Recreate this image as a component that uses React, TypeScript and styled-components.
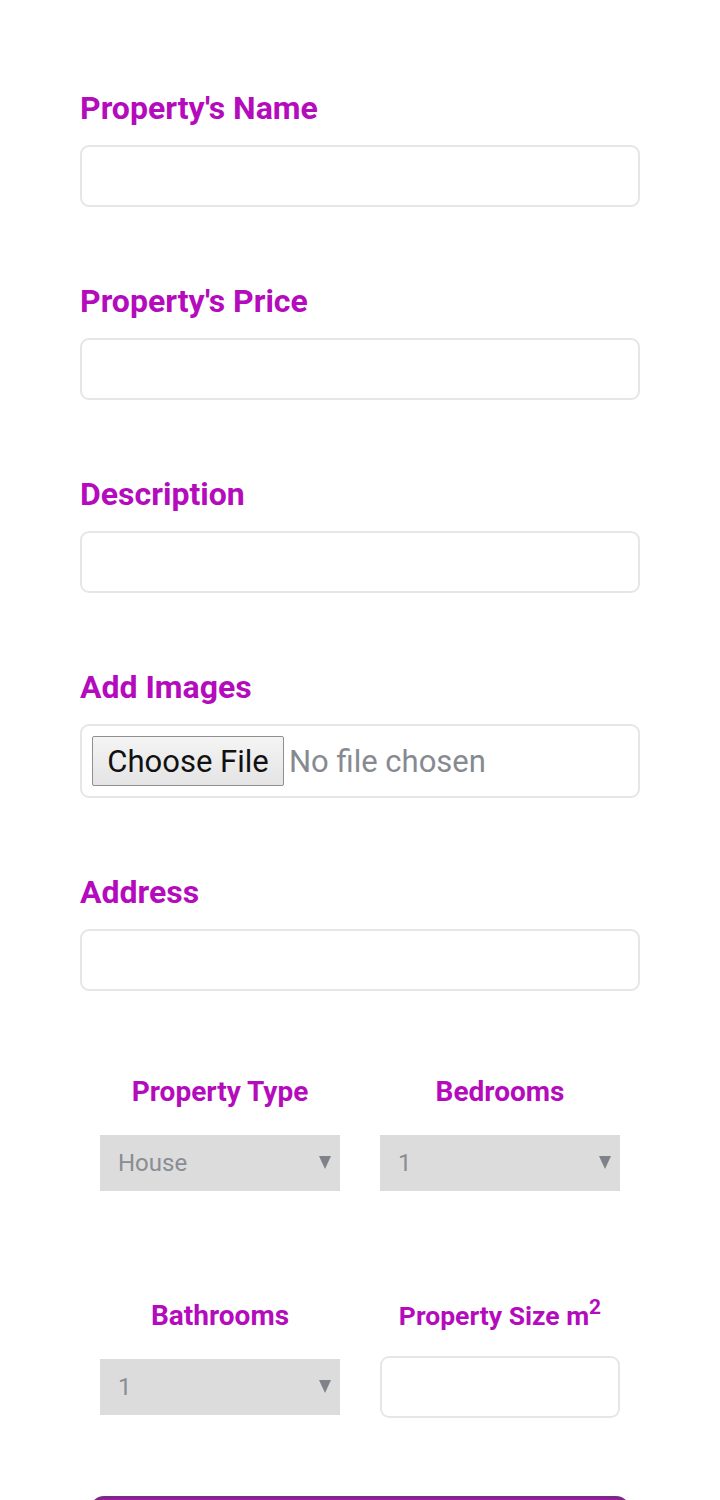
import React from "react";
import styled, { createGlobalStyle } from "styled-components";

const Global = createGlobalStyle`
  html, body { margin: 0; padding: 0; background: #ffffff; }
  body { font-family: Roboto, "Liberation Sans", Arial, sans-serif; }
  * { box-sizing: border-box; }
`;

const Form = styled.form`
  display: flex;
  flex-direction: column;
  padding: 91px 80px 0 80px;
  width: 720px;
  height: 1500px;
  overflow: hidden;
`;

const Field = styled.div<{ $mb?: number }>`
  display: flex;
  flex-direction: column;
  margin-bottom: ${(p) => p.$mb ?? 77}px;
`;

const Label = styled.label`
  font-family: Roboto, sans-serif;
  font-weight: 700;
  font-size: 32px;
  line-height: 34px;
  color: #b40cbc;
  margin-bottom: 20px;
`;

const TextInput = styled.input`
  height: 62px;
  width: 100%;
  border: 2px solid #e6e6e6;
  border-radius: 9px;
  background: #fff;
  font-family: Roboto, sans-serif;
  font-size: 24px;
  padding: 0 14px;
  outline: none;
`;

const FileBox = styled.div`
  height: 74px;
  border: 2px solid #e6e6e6;
  border-radius: 9px;
  display: flex;
  align-items: center;
  padding: 0 10px;
  gap: 5px;
`;

const FileButton = styled.button`
  height: 50px;
  width: 192px;
  border: 1px solid #8f8f8f;
  border-radius: 2px;
  background: linear-gradient(#f4f4f4, #e4e4e4);
  font-family: Roboto, "Liberation Sans", sans-serif;
  font-size: 31px;
  color: #111;
  padding: 0;
`;

const FileText = styled.span`
  font-family: Roboto, "Liberation Sans", sans-serif;
  font-size: 31px;
  color: #868a90;
`;

const Row = styled.div<{ $mb: number }>`
  display: grid;
  grid-template-columns: 240px 240px;
  column-gap: 40px;
  padding: 0 20px;
  margin-bottom: ${(p) => p.$mb}px;
`;

const Cell = styled.div`
  display: flex;
  flex-direction: column;
  align-items: center;
`;

const SmallLabel = styled.label<{ $size?: number }>`
  font-family: Roboto, sans-serif;
  font-weight: 700;
  font-size: ${(p) => p.$size ?? 28}px;
  line-height: 30px;
  height: 30px;
  color: #b40cbc;
  margin-bottom: 25px;
  text-align: center;
  white-space: nowrap;
  sup { font-size: 21px; line-height: 0; vertical-align: 11px; }
`;

const ControlArea = styled.div`
  height: 62px;
  width: 100%;
  display: flex;
  align-items: center;
`;

const SelectWrap = styled.div`
  position: relative;
  width: 100%;
  height: 56px;
  &::after {
    content: "";
    position: absolute;
    right: 9px;
    top: 21px;
    border-left: 6px solid transparent;
    border-right: 6px solid transparent;
    border-top: 13px solid #7f8288;
    pointer-events: none;
  }
`;

const Select = styled.select`
  appearance: none;
  -webkit-appearance: none;
  width: 100%;
  height: 56px;
  border: none;
  border-radius: 0;
  background: #dcdcdc;
  color: #8a8d93;
  font-family: Roboto, sans-serif;
  font-size: 24px;
  padding: 0 18px;
  outline: none;
`;

const Submit = styled.button`
  margin: 0 10px;
  height: 60px;
  flex-shrink: 0;
  border: 3px solid #7a2a82;
  border-radius: 14px;
  background: #b40cbc;
`;

export default function App() {
  return (
    <>
      <Global />
      <Form onSubmit={(e) => e.preventDefault()}>
        <Field>
          <Label>Property's Name</Label>
          <TextInput type="text" />
        </Field>
        <Field>
          <Label>Property's Price</Label>
          <TextInput type="text" />
        </Field>
        <Field>
          <Label>Description</Label>
          <TextInput type="text" />
        </Field>
        <Field>
          <Label>Add Images</Label>
          <FileBox>
            <FileButton type="button">Choose File</FileButton>
            <FileText>No file chosen</FileText>
          </FileBox>
        </Field>
        <Field $mb={86}>
          <Label>Address</Label>
          <TextInput type="text" />
        </Field>
        <Row $mb={107}>
          <Cell>
            <SmallLabel>Property Type</SmallLabel>
            <ControlArea>
              <SelectWrap>
                <Select defaultValue="House">
                  <option>House</option>
                  <option>Apartment</option>
                </Select>
              </SelectWrap>
            </ControlArea>
          </Cell>
          <Cell>
            <SmallLabel>Bedrooms</SmallLabel>
            <ControlArea>
              <SelectWrap>
                <Select defaultValue="1">
                  <option>1</option>
                  <option>2</option>
                </Select>
              </SelectWrap>
            </ControlArea>
          </Cell>
        </Row>
        <Row $mb={78}>
          <Cell>
            <SmallLabel>Bathrooms</SmallLabel>
            <ControlArea>
              <SelectWrap>
                <Select defaultValue="1">
                  <option>1</option>
                  <option>2</option>
                </Select>
              </SelectWrap>
            </ControlArea>
          </Cell>
          <Cell>
            <SmallLabel $size={26.5}>
              Property Size m<sup>2</sup>
            </SmallLabel>
            <ControlArea>
              <TextInput type="text" />
            </ControlArea>
          </Cell>
        </Row>
        <Submit type="submit" aria-label="Add Property" />
      </Form>
    </>
  );
}
